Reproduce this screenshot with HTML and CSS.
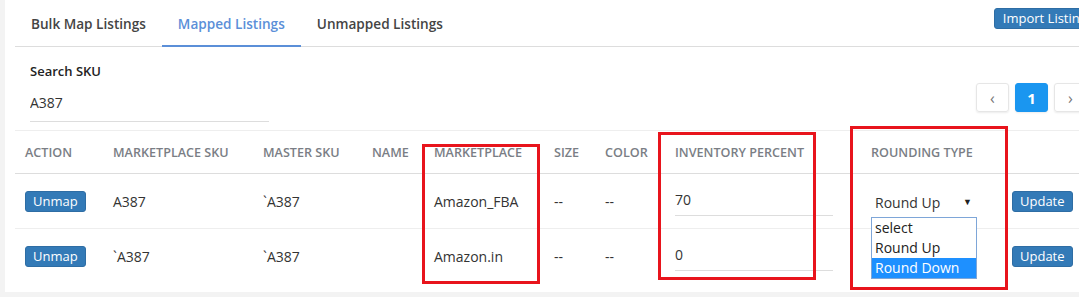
FILE: index.html
```html
<!DOCTYPE html>
<html lang="en">
<head>
  <meta charset="UTF-8">
  <title>Mapped Listings</title>
  <link rel="stylesheet" href="styles.css">
</head>
<body>
  <div class="card">
    <div class="tabs">
      <a class="tab">Bulk Map Listings</a>
      <a class="tab active">Mapped Listings</a>
      <a class="tab">Unmapped Listings</a>
      <button class="btn import">Import Listings</button>
    </div>

    <div class="toolbar">
      <div class="search">
        <label>Search SKU</label>
        <input type="text" class="line-input" value="A387">
      </div>
      <div class="pager">
        <span class="page">&lsaquo;</span>
        <span class="page current">1</span>
        <span class="page">&rsaquo;</span>
      </div>
    </div>

    <div class="table-wrap">
      <table class="listings">
        <colgroup>
          <col style="width:88px"><col style="width:150px"><col style="width:109px"><col style="width:62px">
          <col style="width:120px"><col style="width:51px"><col style="width:70px"><col style="width:196px">
          <col style="width:141px"><col>
        </colgroup>
        <thead>
          <tr>
            <th>Action</th>
            <th>Marketplace SKU</th>
            <th>Master SKU</th>
            <th>Name</th>
            <th>Marketplace</th>
            <th>Size</th>
            <th>Color</th>
            <th>Inventory Percent</th>
            <th>Rounding Type</th>
            <th></th>
          </tr>
        </thead>
        <tbody>
          <tr>
            <td><button class="btn small">Unmap</button></td>
            <td>A387</td>
            <td>`A387</td>
            <td></td>
            <td>Amazon_FBA</td>
            <td>--</td>
            <td>--</td>
            <td><input type="text" class="line-input pct" value="70"></td>
            <td>
              <div class="select-box">
                <span>Round Up</span><span class="caret">&#9660;</span>
                <ul class="options">
                  <li>select</li>
                  <li>Round Up</li>
                  <li class="hover">Round Down</li>
                </ul>
              </div>
            </td>
            <td><button class="btn small">Update</button></td>
          </tr>
          <tr>
            <td><button class="btn small">Unmap</button></td>
            <td>`A387</td>
            <td>`A387</td>
            <td></td>
            <td>Amazon.in</td>
            <td>--</td>
            <td>--</td>
            <td><input type="text" class="line-input pct" value="0"></td>
            <td></td>
            <td><button class="btn small">Update</button></td>
          </tr>
        </tbody>
      </table>

      <div class="mark mark-market"></div>
      <div class="mark mark-pct"></div>
      <div class="mark mark-round"></div>
    </div>
  </div>
</body>
</html>
```

FILE: styles.css
```css
body {
  margin: 0;
  background: #f3f3f3;
  font-family: "Open Sans", "Liberation Sans", sans-serif;
  color: #333;
  overflow: hidden;
}

.card {
  margin-left: 5px;
  width: 1107px;
  height: 292px;
  background: #fff;
  padding: 0 10px;
  box-sizing: border-box;
}

.tabs {
  display: flex;
  align-items: stretch;
  height: 46px;
  border-bottom: 1px solid #ddd;
}

.tab {
  display: flex;
  align-items: center;
  padding: 2px 16px 0;
  font-size: 13.6px;
  font-weight: 600;
  color: #444;
  border-bottom: 2px solid transparent;
  margin-bottom: -1px;
}

.tab.active {
  color: #5b8fd8;
  border-bottom-color: #5b8fd8;
}

.btn {
  font-family: inherit;
  font-size: 13px;
  color: #fff;
  background: #337ab7;
  border: 1px solid #2e6da4;
  border-radius: 3px;
  padding: 0 8px;
  height: 21px;
  line-height: 19px;
  cursor: pointer;
}

.btn.small {
  padding: 0 7px;
}

.import {
  margin: 8px 0 0 auto;
  height: 21px;
}

.toolbar {
  display: flex;
  justify-content: space-between;
  height: 83px;
  border-bottom: 1px solid #eee;
}

.search {
  padding: 15px 0 0 15px;
}

.search label {
  display: block;
  font-size: 13px;
  font-weight: 600;
  color: #222;
}

.line-input {
  font-family: inherit;
  font-size: 14px;
  color: #333;
  border: none;
  border-bottom: 1px solid #ddd;
  outline: none;
  width: 239px;
  padding: 8px 0 9px;
  margin-top: 5px;
}

.pager {
  display: flex;
  gap: 6px;
  padding: 36px 0 0;
  margin-right: 15px;
}

.page {
  width: 31px;
  height: 27px;
  border: 1px solid #e6e6e6;
  border-radius: 3px;
  box-shadow: 0 1px 2px rgba(0, 0, 0, 0.08);
  display: flex;
  align-items: center;
  justify-content: center;
  font-size: 16px;
  color: #777;
}

.page.current {
  background: #1a96f0;
  border-color: #1a96f0;
  color: #fff;
  font-weight: 700;
  font-size: 15px;
}

.table-wrap {
  position: relative;
}

.listings {
  border-collapse: collapse;
  table-layout: fixed;
  width: 1100px;
}

.listings th {
  text-align: left;
  font-size: 12.6px;
  font-weight: 600;
  text-transform: uppercase;
  color: #7a7e85;
  height: 42px;
  padding: 0 0 0 10px;
  border-bottom: 1px solid #ddd;
  white-space: nowrap;
}

.listings td {
  font-size: 14px;
  height: 54px;
  padding: 0 0 0 10px;
  border-bottom: 1px solid #eee;
  white-space: nowrap;
}

.listings tbody tr:last-child td {
  border-bottom: none;
}

.pct {
  width: 158px;
  margin-top: 0;
  padding: 4px 0 6px;
}

.select-box {
  position: relative;
  display: flex;
  justify-content: space-between;
  width: 97px;
  padding: 2px 0 0 4px;
  font-size: 14px;
}

.caret {
  font-size: 9px;
  line-height: 18px;
  color: #222;
}

.options {
  position: absolute;
  top: 26px;
  left: 0;
  width: 104px;
  margin: 0;
  padding: 0;
  list-style: none;
  background: #fff;
  border: 1px solid #7ea6d8;
  z-index: 2;
}

.options li {
  height: 20px;
  line-height: 20px;
  padding-left: 3px;
  font-size: 14px;
  color: #222;
}

.options li.hover {
  background: #1e90ff;
  color: #fff;
}

.mark {
  position: absolute;
  border: 3px solid #e8141c;
  box-sizing: border-box;
  z-index: 3;
}

.mark-market {
  left: 407px;
  top: 13px;
  width: 118px;
  height: 140px;
}

.mark-pct {
  left: 643px;
  top: 1px;
  width: 158px;
  height: 148px;
}

.mark-round {
  left: 835px;
  top: -5px;
  width: 158px;
  height: 164px;
}
```
